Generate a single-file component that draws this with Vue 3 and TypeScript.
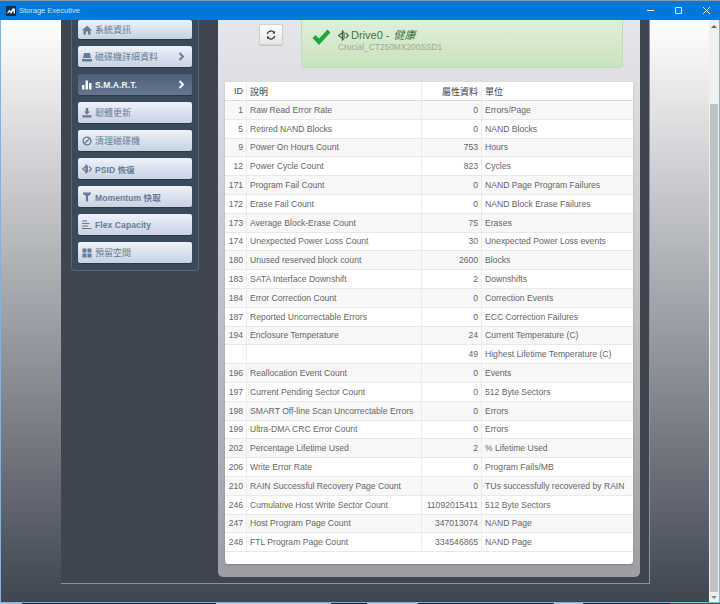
<script setup lang="ts">
interface Row { id: string; name: string; val: string; unit: string }
const rows: Row[] = [
  { id: '1', name: 'Raw Read Error Rate', val: '0', unit: 'Errors/Page' },
  { id: '5', name: 'Retired NAND Blocks', val: '0', unit: 'NAND Blocks' },
  { id: '9', name: 'Power On Hours Count', val: '753', unit: 'Hours' },
  { id: '12', name: 'Power Cycle Count', val: '823', unit: 'Cycles' },
  { id: '171', name: 'Program Fail Count', val: '0', unit: 'NAND Page Program Failures' },
  { id: '172', name: 'Erase Fail Count', val: '0', unit: 'NAND Block Erase Failures' },
  { id: '173', name: 'Average Block-Erase Count', val: '75', unit: 'Erases' },
  { id: '174', name: 'Unexpected Power Loss Count', val: '30', unit: 'Unexpected Power Loss events' },
  { id: '180', name: 'Unused reserved block count', val: '2600', unit: 'Blocks' },
  { id: '183', name: 'SATA Interface Downshift', val: '2', unit: 'Downshifts' },
  { id: '184', name: 'Error Correction Count', val: '0', unit: 'Correction Events' },
  { id: '187', name: 'Reported Uncorrectable Errors', val: '0', unit: 'ECC Correction Failures' },
  { id: '194', name: 'Enclosure Temperature', val: '24', unit: 'Current Temperature (C)' },
  { id: '', name: '', val: '49', unit: 'Highest Lifetime Temperature (C)' },
  { id: '196', name: 'Reallocation Event Count', val: '0', unit: 'Events' },
  { id: '197', name: 'Current Pending Sector Count', val: '0', unit: '512 Byte Sectors' },
  { id: '198', name: 'SMART Off-line Scan Uncorrectable Errors', val: '0', unit: 'Errors' },
  { id: '199', name: 'Ultra-DMA CRC Error Count', val: '0', unit: 'Errors' },
  { id: '202', name: 'Percentage Lifetime Used', val: '2', unit: '% Lifetime Used' },
  { id: '206', name: 'Write Error Rate', val: '0', unit: 'Program Fails/MB' },
  { id: '210', name: 'RAIN Successful Recovery Page Count', val: '0', unit: 'TUs successfully recovered by RAIN' },
  { id: '246', name: 'Cumulative Host Write Sector Count', val: '11092015411', unit: '512 Byte Sectors' },
  { id: '247', name: 'Host Program Page Count', val: '347013074', unit: 'NAND Page' },
  { id: '248', name: 'FTL Program Page Count', val: '334546865', unit: 'NAND Page' },
]
interface Nav { label: string; icon: string; active?: boolean; arrow?: boolean; latin?: boolean }
const nav: Nav[] = [
  { label: '系統資訊', icon: 'home' },
  { label: '磁碟機詳細資料', icon: 'hdd', arrow: true },
  { label: 'S.M.A.R.T.', icon: 'bars', active: true, arrow: true, latin: true },
  { label: '韌體更新', icon: 'down' },
  { label: '清理磁碟機', icon: 'ban' },
  { label: 'PSID 恢復', icon: 'eye', latin: true },
  { label: 'Momentum 快取', icon: 'filter', latin: true },
  { label: 'Flex Capacity', icon: 'lines', latin: true },
  { label: '預留空間', icon: 'grid' },
]
</script>

<template>
  <div class="window">
    <header class="titlebar">
      <svg class="logo" width="10" height="10" viewBox="0 0 10 10">
        <rect width="10" height="10" fill="#1a2b4a" />
        <path d="M1 7L3.500 3.500 4.500 5.500 6.500 2.500H9V7.500H7.500V4.500L5 8 3.500 5.800 2 7.500Z" fill="#f2f5fa" />
      </svg>
      <span class="app-name">Storage Executive</span>
      <div class="controls">
        <svg width="9" height="9" viewBox="0 0 9 9"><path d="M1 4.500H8" stroke="#e3f0fb" stroke-width="1" /></svg>
        <svg width="9" height="9" viewBox="0 0 9 9"><rect x="1.500" y="1.500" width="6" height="6" rx=".5" fill="none" stroke="#e3f0fb" /></svg>
        <svg width="9" height="9" viewBox="0 0 9 9"><path d="M1 1L8 8M8 1L1 8" stroke="#e3f0fb" stroke-width="1" /></svg>
      </div>
    </header>

    <div class="viewport">
      <div class="page">
        <div class="frame">
          <aside class="side">
            <nav class="group">
              <a v-for="n in nav" :key="n.label" class="nav-btn" :class="{ active: n.active, latin: n.latin }">
                <svg class="ico" width="10" height="10" viewBox="0 0 10 10">
                  <path v-if="n.icon === 'home'" d="M5 .8L0 5.300h1.500V9.500h2.500V6.500h2V9.500h2.500V5.300H10Z" />
                  <path v-else-if="n.icon === 'hdd'" d="M2 1H8L9 6H1ZM0 7H10V9.500H0Z" />
                  <path v-else-if="n.icon === 'bars'" d="M0 5H2.500V9.500H0ZM3.500 .5H6V9.500H3.500ZM7 3H9.500V9.500H7Z" />
                  <path v-else-if="n.icon === 'down'" d="M3.800 0H6.200V3.500H8L5 6.800 2 3.500H3.800ZM.5 7.200H9.500V9.500H.5Z" />
                  <template v-else-if="n.icon === 'ban'">
                    <circle cx="5" cy="5" r="3.900" fill="none" stroke="currentColor" stroke-width="1.400" />
                    <path d="M2.500 7.500L7.500 2.500" stroke="currentColor" stroke-width="1.400" />
                  </template>
                  <template v-else-if="n.icon === 'eye'">
                    <path d="M.5 5L4 2.300V7.700Z" fill="none" stroke="currentColor" stroke-width="1.100" />
                    <path d="M4 .8L5.500 2.500V7.500L4 9.200ZM7 2.500L9.500 5 7 7.500" fill="none" stroke="currentColor" stroke-width="1.100" />
                  </template>
                  <path v-else-if="n.icon === 'filter'" d="M1 .5H9V2L6 4.300V9.500H4V4.300L1 2Z" />
                  <path v-else-if="n.icon === 'lines'" d="M0 .5H5V1.500H0ZM0 3H7.500V4H0ZM0 5.500H6V6.500H0ZM0 8H9.500V9H0Z" />
                  <path v-else d="M.5 .5H4.500V4.500H.5ZM5.500 .5H9.500V4.500H5.500ZM.5 5.500H4.500V9.500H.5ZM5.500 5.500H9.500V9.500H5.500Z" />
                </svg>
                <span class="nav-label">{{ n.label }}</span>
                <svg v-if="n.arrow" class="chev" width="7" height="9" viewBox="0 0 7 9">
                  <path d="M1.500 1L5 4.500 1.500 8" fill="none" stroke="currentColor" stroke-width="2" />
                </svg>
              </a>
            </nav>
          </aside>

          <main class="content">
            <div class="top">
              <button class="refresh" type="button" aria-label="refresh">
                <svg width="10" height="10" viewBox="0 0 10 10">
                  <path d="M1.200 4A3.900 3.900 0 0 1 8 2.400M8.800 6A3.900 3.900 0 0 1 2 7.600" fill="none" stroke="#333" stroke-width="1.200" />
                  <path d="M9 .8V3.500H6.300ZM1 9.200V6.500H3.700Z" fill="#333" />
                </svg>
              </button>
              <div class="alert">
                <svg class="check" width="19" height="17" viewBox="0 0 19 17">
                  <path d="M.5 9L3.500 6 7 9.500 15.500.5 18.500 3.500 7 16Z" fill="#1fa83a" />
                </svg>
                <div class="alert-text">
                  <div class="drive">
                    <svg width="11" height="11" viewBox="0 0 10 10">
                      <path d="M.5 5L4 2.300V7.700Z" fill="none" stroke="#3d6b3f" stroke-width="1" />
                      <path d="M4 .8L5.500 2.500V7.500L4 9.200ZM7 2.500L9.500 5 7 7.500" fill="none" stroke="#3d6b3f" stroke-width="1" />
                    </svg>
                    <span>Drive0 - </span><em>健康</em>
                  </div>
                  <div class="model">Crucial_CT250MX200SSD1</div>
                </div>
              </div>
            </div>

            <section class="table">
              <div class="tr head">
                <div class="td c-id">ID</div>
                <div class="td">說明</div>
                <div class="td c-val">屬性資料</div>
                <div class="td">單位</div>
              </div>
              <div v-for="(r, i) in rows" :key="i" class="tr" :class="{ odd: i % 2 === 0 }">
                <div class="td c-id">{{ r.id }}</div>
                <div class="td">{{ r.name }}</div>
                <div class="td c-val">{{ r.val }}</div>
                <div class="td">{{ r.unit }}</div>
              </div>
            </section>
          </main>
        </div>
      </div>

      <div class="scrollbar">
        <span class="arrow up"></span>
        <span class="thumb"></span>
        <span class="arrow down"></span>
      </div>
    </div>
    <div class="desktop"></div>
  </div>
</template>

<style>
html, body { margin: 0; background: #1a3a5c; }
</style>

<style scoped>
.window {
  width: 720px;
  height: 604px;
  display: flex;
  flex-direction: column;
  overflow: hidden;
  font-family: "Liberation Sans", "Noto Sans CJK TC", sans-serif;
  box-sizing: border-box;
  border-top: 1px solid #8d99a5;
}
.titlebar {
  height: 19px;
  flex: none;
  background: #0078d7;
  display: flex;
  align-items: center;
  padding-left: 6px;
  color: #cfe4f6;
  font-size: 7.500px;
}
.logo { margin-right: 3px; }
.controls {
  margin-left: auto;
  display: flex;
  gap: 19px;
  padding-right: 9px;
}
.viewport {
  flex: 1;
  min-height: 0;
  display: flex;
  border: 1px solid #7fb4e2;
  border-top: 0;
  overflow: hidden;
}
.page {
  flex: 1;
  min-width: 0;
  padding-left: 60px;
  padding-bottom: 18px;
  background: linear-gradient(#ffffff, #3f4551 100%);
}
.frame {
  width: 589px;
  height: 100%;
  box-sizing: border-box;
  display: flex;
  background: #3f4551;
  border-right: 1px solid #8b92a0;
  border-bottom: 1px solid #8b92a0;
  padding: 0 9px 6px 0;
}
.side {
  width: 157px;
  flex: none;
  padding-left: 10px;
  box-sizing: border-box;
}
.group {
  width: 128px;
  box-sizing: border-box;
  background: #3b4a5a;
  padding: 0 6px 7px;
  border-radius: 0 0 4px 4px;
  border: 1px solid #5b6675;
  border-top: 0;
  display: flex;
  flex-direction: column;
  gap: 7px;
}
.nav-btn {
  height: 21px;
  box-sizing: border-box;
  display: flex;
  align-items: center;
  padding: 0 5px 0 4px;
  border-radius: 2px;
  background: linear-gradient(#eef2fa, #c8d2e0);
  color: #667b97;
  font-size: 9px;
  box-shadow: 0 1px 1px rgba(0, 0, 0, .25);
}
.nav-btn:first-child { height: 19px; }
.nav-btn.latin { font-weight: 700; font-size: 8.500px; letter-spacing: .1px; }
.nav-btn.active {
  background: linear-gradient(#4e5f78, #66768e);
  color: #f2f5f9;
}
.ico { fill: currentColor; flex: none; }
.nav-label { margin-left: 3px; }
.chev { margin-left: auto; margin-right: 2px; }
.content {
  flex: 1;
  min-width: 0;
  border-radius: 0 0 5px 5px;
  background: linear-gradient(#e6e7ea, #9c9ea4);
  padding: 0 7px 13px;
  display: flex;
  flex-direction: column;
  gap: 14px;
}
.top {
  display: flex;
  align-items: flex-start;
  padding-left: 34px;
  gap: 18px;
  height: 48px;
  flex: none;
}
.refresh {
  width: 24px;
  height: 21px;
  margin-top: 4px;
  padding: 0;
  border: 1px solid #d0d1d4;
  border-radius: 2px;
  background: linear-gradient(#ffffff, #e6e6e6);
  display: flex;
  align-items: center;
  justify-content: center;
  box-shadow: 0 1px 1px rgba(0, 0, 0, .15);
}
.alert {
  width: 322px;
  height: 48px;
  box-sizing: border-box;
  background: linear-gradient(#e0efdb, #c8e3bd);
  border: 1px solid #c2dcb6;
  border-top: 0;
  border-radius: 0 0 4px 4px;
  display: flex;
  align-items: flex-start;
  padding: 9px 0 0 10px;
  gap: 7px;
}
.drive {
  display: flex;
  align-items: center;
  font-size: 11px;
  line-height: 13px;
  color: #3c763d;
  gap: 2px;
}
.drive span { white-space: pre; }
.drive em { font-style: italic; margin-left: -1px; }
.model {
  font-size: 8.400px;
  line-height: 11px;
  color: #9aaa97;
}
.table {
  flex: 1;
  min-height: 0;
  background: #fff;
  border-radius: 0 0 3px 3px;
  box-shadow: 0 1px 2px rgba(0, 0, 0, .2);
  color: #666;
  font-size: 8.600px;
}
.tr {
  display: grid;
  grid-template-columns: 22px 175px 60px 1fr;
  height: 18.800px;
  box-sizing: border-box;
  border-bottom: 1px solid #e9e9e9;
}
.tr.odd { background: #f8f8f8; }
.tr.head {
  height: 19px;
  border-bottom: 1px solid #ddd;
  color: #444;
  background: #fff;
  font-size: 9px;
}
.td {
  display: flex;
  align-items: center;
  padding: 0 3px;
  border-right: 1px solid #ececec;
  white-space: nowrap;
  overflow: hidden;
}
.td:last-child { border-right: 0; }
.c-id, .c-val { justify-content: flex-end; }
.scrollbar {
  width: 10px;
  flex: none;
  background: #f0f0f0;
  position: relative;
}
.thumb {
  position: absolute;
  left: 1px;
  right: 1px;
  top: 84px;
  bottom: 10px;
  background: #c1c1c1;
}
.arrow {
  position: absolute;
  left: 2px;
  width: 0;
  height: 0;
  border-left: 3px solid transparent;
  border-right: 3px solid transparent;
}
.arrow.up { top: 5px; border-bottom: 3px solid #666; }
.arrow.down { bottom: 3px; border-top: 3px solid #888; }
.desktop {
  height: 1px;
  flex: none;
  background: linear-gradient(90deg,
    #9fc4e6 0 3%, #10263f 3% 30%, #a9c4dc 30% 46%, #10263f 46% 51%, #a9c4dc 51% 58%,
    #10263f 58% 77%, #b9d0e4 77% 81%, #10263f 81% 93%, #a8243c 93%);
}
</style>
